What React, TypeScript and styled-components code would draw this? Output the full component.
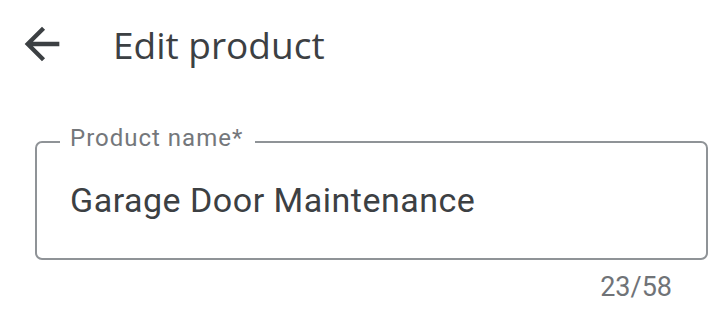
import React from 'react';
import styled, { createGlobalStyle } from 'styled-components';

const GlobalStyle = createGlobalStyle`
  html, body {
    margin: 0;
    padding: 0;
    background: #ffffff;
  }
  body {
    font-family: Roboto, "Liberation Sans", sans-serif;
  }
`;

const Page = styled.div`
  width: 728px;
  height: 332px;
  box-sizing: border-box;
  padding: 14px 20px 0 16px;
  display: flex;
  flex-direction: column;
`;

const Header = styled.div`
  display: flex;
  align-items: center;
  height: 60px;
`;

const BackButton = styled.button`
  width: 52px;
  height: 52px;
  padding: 0;
  border: none;
  background: none;
  display: flex;
  align-items: center;
  justify-content: center;
  color: #3c4043;
`;

const Title = styled.h1`
  margin: 0 0 0 45px;
  font-family: "Open Sans", Roboto, sans-serif;
  font-weight: 400;
  font-size: 37px;
  color: #3c4043;
`;

const Field = styled.fieldset`
  margin: 56px 0 0 19px;
  padding: 0 33px;
  height: 130px;
  box-sizing: border-box;
  border: 2px solid #8f9397;
  border-radius: 7px;
`;

const Legend = styled.legend`
  padding: 0 12px 7px 10px;
  margin-left: -10px;
  font-size: 24px;
  letter-spacing: 1px;
  line-height: 17px;
  color: #74777b;
`;

const Value = styled.div`
  font-size: 34px;
  letter-spacing: 0.5px;
  line-height: 92px;
  color: #3c4043;
`;

const Counter = styled.div`
  align-self: flex-end;
  margin: 11px 36px 0 0;
  font-size: 27px;
  line-height: 32px;
  color: #707377;
`;

function BackArrow() {
  return (
    <svg width="52" height="52" viewBox="0 0 24 24" fill="currentColor">
      <path d="M20 11H7.83l5.59-5.59L12 4l-8 8 8 8 1.41-1.41L7.83 13H20v-2z" />
    </svg>
  );
}

export default function App() {
  return (
    <Page>
      <GlobalStyle />
      <Header>
        <BackButton aria-label="Back">
          <BackArrow />
        </BackButton>
        <Title>Edit product</Title>
      </Header>
      <Field>
        <Legend>Product name*</Legend>
        <Value>Garage Door Maintenance</Value>
      </Field>
      <Counter>23/58</Counter>
    </Page>
  );
}
